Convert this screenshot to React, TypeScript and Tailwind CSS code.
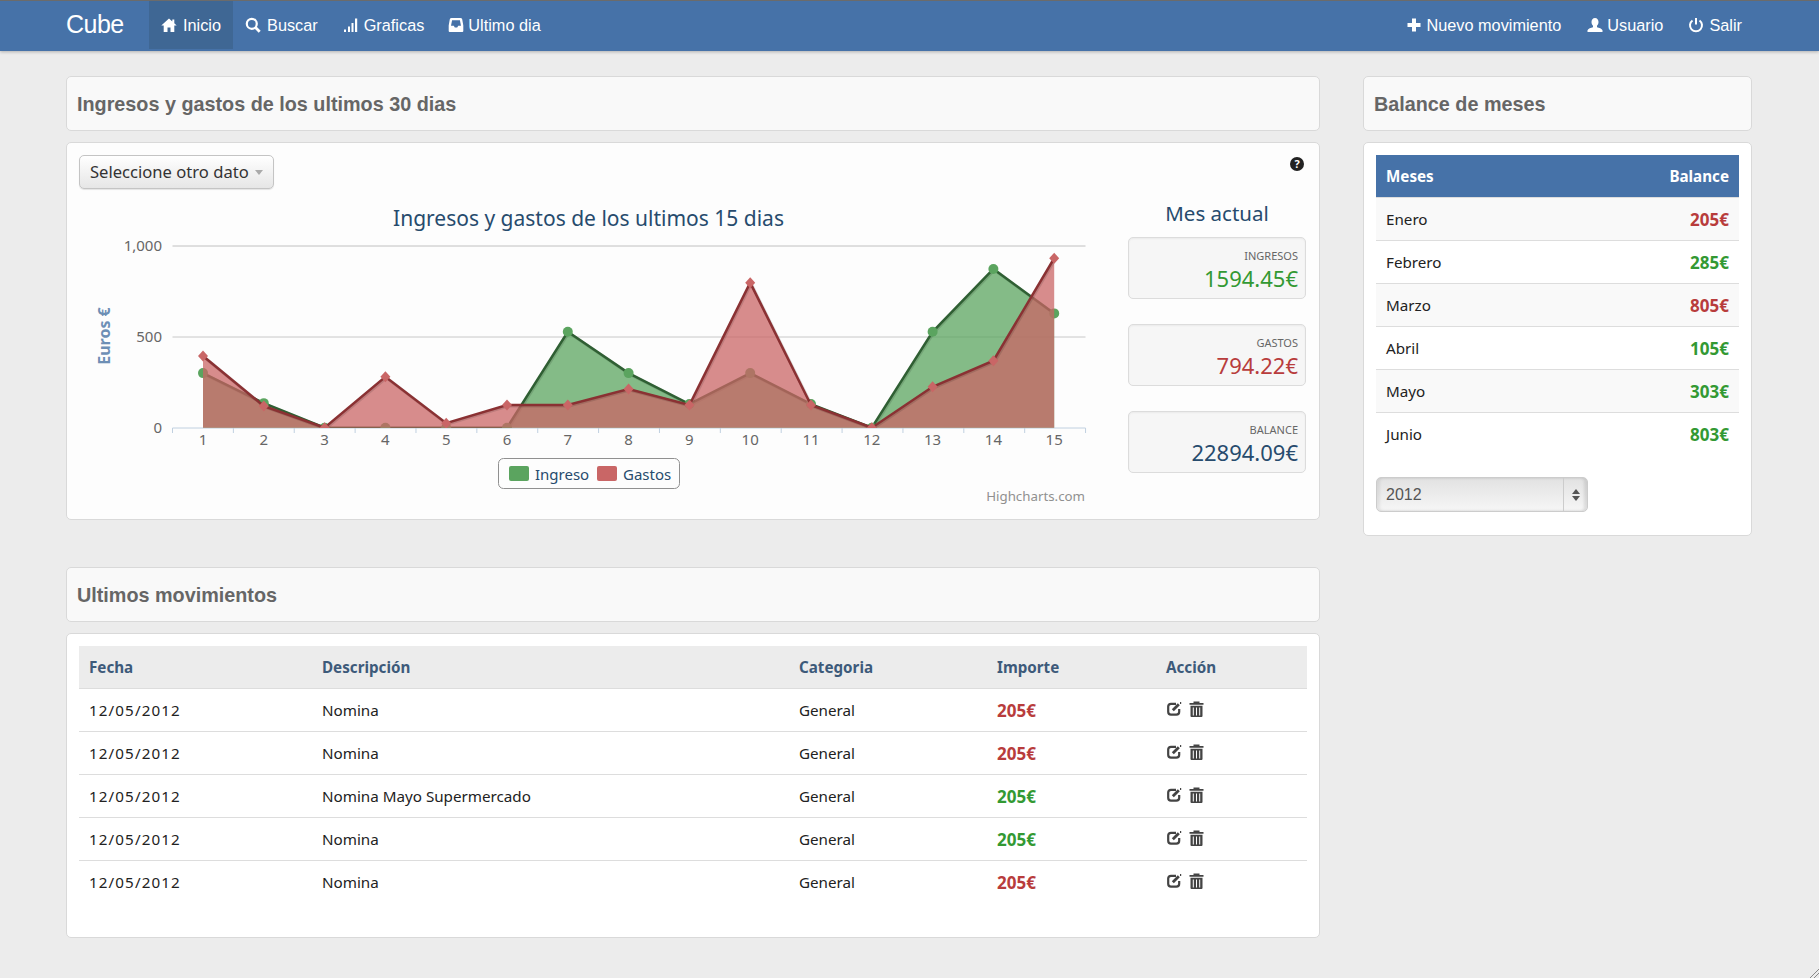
import React from 'react'

const ingresos = [300, 135, 0, 0, 0, 0, 527, 300, 130, 300, 130, 0, 527, 872, 628]
const gastos = [394, 119, 0, 280, 25, 125, 125, 212, 125, 797, 125, 0, 225, 368, 931]

const xAt = (i: number) => 203 + i * 60.8
const yAt = (v: number) => 427.7 - v * 0.182
const linePoints = (data: number[]) => data.map((v, i) => `${xAt(i)},${yAt(v)}`).join(' ')
const areaPoints = (data: number[]) => `${xAt(0)},427.7 ${linePoints(data)} ${xAt(14)},427.7`

const chartFont = { fontFamily: '"Noto Sans", sans-serif' }

function Chart() {
  return (
    <svg viewBox="79 200 1021 310" className="h-[310px] w-[1021px] shrink-0" style={chartFont}>
      <defs>
        <clipPath id="plot">
          <rect x="160" y="230" width="930" height="198" />
        </clipPath>
      </defs>

      <text x="588.5" y="226" textAnchor="middle" fontSize="21" fill="#274b6d">Ingresos y gastos de los ultimos 15 dias</text>

      <line x1="172.5" x2="1085.5" y1="246" y2="246" stroke="#c0c0c0" />
      <line x1="172.5" x2="1085.5" y1="337" y2="337" stroke="#c8c8c8" />
      <line x1="172.5" x2="1085.5" y1="428" y2="428" stroke="#c0d0e0" />
      {Array.from({ length: 16 }).map((_, i) => (
        <line key={i} x1={172.5 + i * 60.87} x2={172.5 + i * 60.87} y1="428" y2="433" stroke="#c0d0e0" />
      ))}

      <text x="162" y="251" textAnchor="end" fontSize="15" fill="#666">1,000</text>
      <text x="162" y="342" textAnchor="end" fontSize="15" fill="#666">500</text>
      <text x="162" y="433" textAnchor="end" fontSize="15" fill="#666">0</text>
      {ingresos.map((_, i) => (
        <text key={i} x={xAt(i)} y="445" textAnchor="middle" fontSize="15" fill="#666">{i + 1}</text>
      ))}
      <text transform="translate(110 336) rotate(-90)" textAnchor="middle" fontSize="16" fontWeight="700" fill="#6d8fb5">Euros €</text>

      <g clipPath="url(#plot)">
        {/* ingresos */}
        <polygon points={areaPoints(ingresos)} fill="#5ba45f" fillOpacity="0.75" />
        <polyline points={linePoints(ingresos)} transform="translate(1 1)" fill="none" stroke="#000" strokeOpacity="0.12" strokeWidth="3" />
        <polyline points={linePoints(ingresos)} fill="none" stroke="#2f5f33" strokeWidth="2.5" />
        {ingresos.map((v, i) => (
          <circle key={i} cx={xAt(i)} cy={yAt(v)} r="5" fill="#5ba45f" />
        ))}

        {/* gastos */}
        <polygon points={areaPoints(gastos)} fill="#c96666" fillOpacity="0.75" />
        <polyline points={linePoints(gastos)} transform="translate(1 1)" fill="none" stroke="#000" strokeOpacity="0.12" strokeWidth="3" />
        <polyline points={linePoints(gastos)} fill="none" stroke="#8a3133" strokeWidth="2.5" />
        {gastos.map((v, i) => (
          <polygon key={i} points={`${xAt(i)},${yAt(v) - 5.5} ${xAt(i) + 5},${yAt(v)} ${xAt(i)},${yAt(v) + 5.5} ${xAt(i) - 5},${yAt(v)}`} fill="#c96666" />
        ))}
      </g>

      <rect x="498.5" y="458.5" width="181" height="30" rx="5" fill="none" stroke="#909090" />
      <rect x="509" y="466" width="20" height="15" rx="2" fill="#5ba45f" />
      <text x="535" y="480" fontSize="15" fill="#274b6d">Ingreso</text>
      <rect x="597" y="466" width="20" height="15" rx="2" fill="#c96666" />
      <text x="623" y="480" fontSize="15" fill="#274b6d">Gastos</text>

      <text x="1085" y="501" textAnchor="end" fontSize="13.3" fill="#909090">Highcharts.com</text>
    </svg>
  )
}

function IconHome() {
  return (
    <svg viewBox="0 0 16 16" className="h-4 w-4 fill-white">
      <path d="M8 1.500.3 8.600h2.400V15h3.800v-4.500h3V15h3.800V8.600h2.400l-2.400-2.300V2.500h-2v1.900z" />
    </svg>
  )
}

function IconSearch() {
  return (
    <svg viewBox="0 0 16 16" className="h-4 w-4 fill-none stroke-white">
      <circle cx="6.800" cy="6.800" r="5" strokeWidth="2.200" />
      <path d="m10.500 10.500 4.200 4.200" strokeWidth="2.800" />
    </svg>
  )
}

function IconSignal() {
  return (
    <svg viewBox="0 0 16 16" className="h-4 w-4 fill-white">
      <path d="M2 12.500h2V15H2zM6 9.500h2V15H6zM9.500 6h2v9h-2zM13 1.500h2.200V15H13z" />
    </svg>
  )
}

function IconInbox() {
  return (
    <svg viewBox="0 0 16 16" className="h-4 w-4 fill-white">
      <path fillRule="evenodd" d="M3.500 1h9q1.300 0 1.700 1.300l1.100 6.200V14q0 1-1 1H1.700q-1 0-1-1V8.500l1.100-6.200Q2.200 1 3.500 1zm.6 2.200L3 8.800h2.800l1 1.700h2.400l1-1.700H13l-1.100-5.600z" />
    </svg>
  )
}

function IconPlus() {
  return (
    <svg viewBox="0 0 16 16" className="h-4 w-4 fill-white">
      <path d="M6 1.500h4v4.500h4.500v4H10v4.500H6V10H1.500V6H6z" />
    </svg>
  )
}

function IconUser() {
  return (
    <svg viewBox="0 0 16 16" className="h-4 w-4 fill-white">
      <path d="M8 1c2.200 0 3.500 1.700 3.500 4 0 1.700-.7 3-1.500 3.800v1.400c2 .6 5 1.300 5.500 3V15H.5v-1.800c.5-1.700 3.500-2.400 5.500-3V8.800C5.200 8 4.500 6.700 4.500 5 4.500 2.700 5.800 1 8 1z" />
    </svg>
  )
}

function IconPower() {
  return (
    <svg viewBox="0 0 16 16" className="h-4 w-4 fill-none stroke-white" strokeWidth="2">
      <path d="M4.500 3.500a6 6 0 1 0 7 0" />
      <path d="M8 1v6.500" />
    </svg>
  )
}

function IconEdit() {
  return (
    <svg viewBox="0 0 15 15" className="h-[15px] w-[15px] fill-none stroke-[#444]">
      <path d="M9 2.800H4Q1.200 2.800 1.200 5.500v5.300q0 2.900 2.800 2.900h5.300q2.900 0 2.900-2.900V8" strokeWidth="2.200" />
      <path d="m5.800 9.300 6-6" strokeWidth="2.800" />
      <path d="M13 2h1.200" strokeWidth="2" />
    </svg>
  )
}

function IconTrash() {
  return (
    <svg viewBox="0 0 15 16" className="h-4 w-[15px] fill-[#444]">
      <path fillRule="evenodd" d="M4.500 0.500h6v1.500h4v1.800H.5V2h4zM1.500 4.800h12V15q0 1-1 1h-10q-1 0-1-1zM3.800 6.500V14.500h1V6.500zM7 6.500V14.500h1V6.500zM10.200 6.500V14.500h1V6.500z" />
    </svg>
  )
}

function NavItem({ icon, label, active, iconBox = 'w-[22px]' }: { icon: React.ReactNode; label: string; active?: boolean; iconBox?: string }) {
  return (
    <a className={`flex h-[48px] items-center px-3 text-[16.300px] text-white ${active ? 'bg-[#3f6794]' : ''}`}>
      <span className={iconBox}>{icon}</span>
      {label}
    </a>
  )
}

function PanelHeader({ title }: { title: string }) {
  return (
    <div className="flex h-[55px] items-center rounded-[5px] border border-[#d9d9d9] bg-[#f9f9f9] pt-[2px] pl-[10px]">
      <h2 className="text-[19.800px] font-bold text-[#666]">{title}</h2>
    </div>
  )
}

function Stat({ label, value, color }: { label: string; value: string; color: string }) {
  return (
    <div className="flex h-[62px] flex-col items-end rounded-[5px] border border-[#dcdcdc] bg-[#f6f6f6] pt-[10px] pr-[7px] shadow-[inset_0_1px_2px_rgba(0,0,0,0.05)]">
      <span className="text-[11px] leading-[16px] text-[#666]">{label}</span>
      <span className={`text-[22px] leading-[28px] ${color}`}>{value}</span>
    </div>
  )
}

const meses = [
  { mes: 'Enero', balance: '205€', color: 'text-[#b83c3c]' },
  { mes: 'Febrero', balance: '285€', color: 'text-[#339933]' },
  { mes: 'Marzo', balance: '805€', color: 'text-[#b83c3c]' },
  { mes: 'Abril', balance: '105€', color: 'text-[#339933]' },
  { mes: 'Mayo', balance: '303€', color: 'text-[#339933]' },
  { mes: 'Junio', balance: '803€', color: 'text-[#339933]' },
]

const movimientos = [
  { desc: 'Nomina', color: 'text-[#b83c3c]' },
  { desc: 'Nomina', color: 'text-[#b83c3c]' },
  { desc: 'Nomina Mayo Supermercado', color: 'text-[#339933]' },
  { desc: 'Nomina', color: 'text-[#339933]' },
  { desc: 'Nomina', color: 'text-[#b83c3c]' },
]

export default function App() {
  return (
    <div className="relative min-h-screen bg-[#ececec] font-['Liberation_Sans',sans-serif]">
      {/* Navbar */}
      <header className="flex h-[51px] items-start justify-between border-t border-[#6b6b6b] bg-[#4672a8] pr-[65px] pl-[66px] shadow-[0_1px_3px_rgba(0,0,0,0.25)]">
        <div className="flex items-center">
          <a className="mr-[25px] w-[58px] text-[25px] tracking-[-0.5px] text-white">Cube</a>
          <NavItem icon={<IconHome />} label="Inicio" active />
          <NavItem icon={<IconSearch />} label="Buscar" />
          <NavItem icon={<IconSignal />} label="Graficas" />
          <NavItem icon={<IconInbox />} label="Ultimo dia" iconBox="w-[20px]" />
        </div>
        <div className="flex items-center">
          <NavItem icon={<IconPlus />} label="Nuevo movimiento" iconBox="w-[22px] pl-[2px]" />
          <NavItem icon={<IconUser />} label="Usuario" iconBox="w-[22px] pl-[2px]" />
          <NavItem icon={<IconPower />} label="Salir" iconBox="w-[22px] pl-[1px]" />
        </div>
      </header>

      <main className="flex gap-[43px] pt-[25px] pl-[66px]">
        {/* Columna izquierda */}
        <div className="w-[1254px]">
          <PanelHeader title="Ingresos y gastos de los ultimos 30 dias" />

          <section className="relative mt-[11px] h-[378px] rounded-[5px] border border-[#d9d9d9] bg-[#fdfdfd] px-[12px] pt-[12px] font-['Noto_Sans',sans-serif]">
            <button className="flex h-[34px] w-[195px] items-center rounded-[5px] border border-[#c4c4c4] bg-gradient-to-b from-white to-[#e6e6e6] pl-[10px] text-[16.600px] text-[#333] shadow-[0_1px_1px_rgba(0,0,0,0.1)]">
              Seleccione otro dato
              <span className="ml-[6px] h-0 w-0 border-x-[4.500px] border-t-[5px] border-x-transparent border-t-[#aaa]" />
            </button>
            <span className="absolute top-[14px] right-[15px] flex h-[14px] w-[14px] items-center justify-center rounded-full bg-[#222] text-[11px] font-bold text-white">?</span>

            <div className="mt-[11px] flex">
              <Chart />
              <div className="ml-[28px] w-[178px]">
                <h3 className="h-[37px] text-center text-[20.500px] leading-[26px] text-[#274b6d]">Mes actual</h3>
                <div className="flex flex-col gap-[25px]">
                  <Stat label="INGRESOS" value="1594.45€" color="text-[#339933]" />
                  <Stat label="GASTOS" value="794.22€" color="text-[#b83c3c]" />
                  <Stat label="BALANCE" value="22894.09€" color="text-[#274b6d]" />
                </div>
              </div>
            </div>
          </section>

          <div className="mt-[47px]">
            <PanelHeader title="Ultimos movimientos" />
          </div>

          <section className="mt-[11px] h-[305px] rounded-[5px] border border-[#d9d9d9] bg-white p-[12px] font-['Noto_Sans',sans-serif]">
            <table className="w-full table-fixed border-collapse text-left text-[15.200px] text-[#222] [&_td]:pt-[2px] [&_th]:pt-[2px]">
              <thead>
                <tr className="h-[42px] bg-[#ececec] text-[#3d5a7a]">
                  <th className="w-[233px] pl-[10px] font-bold">Fecha</th>
                  <th className="w-[477px] pl-[10px] font-bold">Descripción</th>
                  <th className="w-[198px] pl-[10px] font-bold">Categoria</th>
                  <th className="w-[169px] pl-[10px] font-bold">Importe</th>
                  <th className="pl-[10px] font-bold">Acción</th>
                </tr>
              </thead>
              <tbody>
                {movimientos.map((m, i) => (
                  <tr key={i} className="h-[43px] border-t border-[#dddddd]">
                    <td className="pl-[10px] tracking-[1.100px]">12/05/2012</td>
                    <td className="pl-[10px]">{m.desc}</td>
                    <td className="pl-[10px]">General</td>
                    <td className={`pl-[10px] text-[17px] font-bold ${m.color}`}>205€</td>
                    <td className="pl-[11px]">
                      <div className="flex items-center gap-[7px] pb-[4px]">
                        <IconEdit />
                        <IconTrash />
                      </div>
                    </td>
                  </tr>
                ))}
              </tbody>
            </table>
          </section>
        </div>

        {/* Columna derecha */}
        <div className="w-[389px]">
          <PanelHeader title="Balance de meses" />
          <section className="mt-[11px] h-[394px] rounded-[5px] border border-[#d9d9d9] bg-white p-[12px] font-['Noto_Sans',sans-serif]">
            <table className="w-full border-collapse text-[15.200px] text-[#222] [&_td]:pt-[2px] [&_th]:pt-[2px]">
              <thead>
                <tr className="h-[42px] bg-[#4672a8] text-white">
                  <th className="pl-[10px] text-left font-bold">Meses</th>
                  <th className="pr-[10px] text-right font-bold">Balance</th>
                </tr>
              </thead>
              <tbody>
                {meses.map((m, i) => (
                  <tr key={m.mes} className={`h-[43px] border-t border-[#dddddd] ${i % 2 === 0 ? 'bg-[#f9f9f9]' : 'bg-white'}`}>
                    <td className="pl-[10px]">{m.mes}</td>
                    <td className={`pr-[10px] text-right text-[17px] font-bold ${m.color}`}>{m.balance}</td>
                  </tr>
                ))}
              </tbody>
            </table>

            <div className="mt-[22px] flex h-[35px] w-[212px] items-center rounded-[5px] border border-[#cccccc] bg-gradient-to-b from-[#e2e2e2] to-[#f6f6f6] font-['Liberation_Sans',sans-serif] text-[16px] text-[#555] shadow-[inset_3px_0_3px_rgba(0,0,0,0.07),inset_-3px_0_3px_rgba(0,0,0,0.1)]">
              <span className="flex-1 pl-[9px]">2012</span>
              <span className="flex h-full w-[24px] flex-col items-center justify-center gap-[2px] border-l border-[#cccccc]">
                <span className="h-0 w-0 border-x-[4px] border-b-[5px] border-x-transparent border-b-[#555]" />
                <span className="h-0 w-0 border-x-[4px] border-t-[5px] border-x-transparent border-t-[#555]" />
              </span>
            </div>
          </section>
        </div>
      </main>

      {/* window resize grip */}
      <svg viewBox="0 0 9 9" className="absolute right-0 bottom-0 h-[9px] w-[9px] stroke-[#8a8a8a]">
        <path d="M9 0 0 9M9 4 4 9" />
      </svg>
    </div>
  )
}
